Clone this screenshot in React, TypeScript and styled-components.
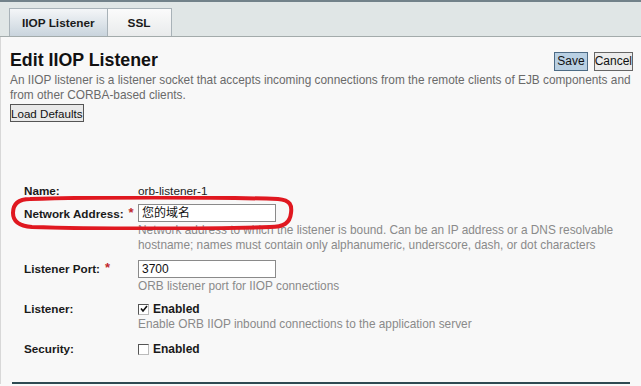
import React from 'react';
import styled, { createGlobalStyle } from 'styled-components';

const GlobalStyle = createGlobalStyle`
  html, body {
    margin: 0;
    padding: 0;
    background: #f8f8f8;
    font-family: 'Liberation Sans', Arial, sans-serif;
  }
`;

const TopLine = styled.div`
  height: 2px;
  background: #72828a;
`;

const TabBar = styled.div`
  display: flex;
  padding: 6px 0 0 9px;
  background: #e0e6e6;
  border-bottom: 1px solid #a3abab;
`;

const Tab = styled.div<{ $active?: boolean }>`
  height: 27px;
  padding: 0 ${(p) => (p.$active ? '12px' : '20px')};
  display: flex;
  align-items: center;
  font-size: 11.8px;
  font-weight: bold;
  color: #1a1a1a;
  border: 1px solid #a8b2b8;
  border-bottom: none;
  margin-right: -1px;
  background: ${(p) =>
    p.$active
      ? 'linear-gradient(#f4f6f8, #c9d4dd)'
      : 'linear-gradient(#fbfbfb, #e9ebec)'};
`;

const Content = styled.div`
  padding: 0 9px;
  border-left: 1px solid #d8d8d8;
`;

const HeaderRow = styled.div`
  display: flex;
  justify-content: space-between;
  align-items: flex-start;
  padding-top: 12px;
`;

const Title = styled.h1`
  margin: 0;
  font-size: 17.8px;
  font-weight: bold;
  color: #111;
  line-height: 22px;
`;

const Buttons = styled.div`
  display: flex;
  gap: 6px;
  margin-top: 3px;
  margin-right: -1px;
`;

const Btn = styled.button<{ $primary?: boolean; $pad?: number }>`
  font-family: 'Liberation Sans', Arial, sans-serif;
  font-size: 12px;
  height: 19px;
  padding: 0 ${(p) => p.$pad ?? 2}px;
  color: #111;
  border: 1px solid ${(p) => (p.$primary ? '#4d6b85' : '#666')};
  background: ${(p) => (p.$primary ? '#b9d0e3' : '#ececec')};
  border-radius: 0;
  line-height: 15px;
`;

const Description = styled.p`
  margin: 2px 0 0;
  font-size: 11.85px;
  line-height: 15px;
  color: #6a6a6a;
  white-space: nowrap;
`;

const LoadButton = styled(Btn)`
  margin-top: 1px;
  display: block;
  height: 18px;
  font-size: 11.6px;
  background: #e9e9e9;
  border-color: #555;
`;

const Form = styled.div`
  margin-top: 62px;
  padding-left: 14px;
  display: grid;
  grid-template-columns: 114px 1fr;
  position: relative;
`;

const Label = styled.div<{ $gap?: number }>`
  font-size: 11.7px;
  font-weight: bold;
  color: #1a1a1a;
  padding-top: ${(p) => p.$gap ?? 4}px;
  line-height: 14px;
  display: flex;
  gap: 5px;
`;

const Required = styled.span`
  color: #c0282d;
  font-size: 13px;
  line-height: 12px;
`;

const Field = styled.div<{ $gap?: number }>`
  padding-top: ${(p) => p.$gap ?? 4}px;
  font-size: 11.8px;
  color: #222;
  line-height: 14px;
`;

const TextBox = styled.div`
  width: 133px;
  height: 16px;
  border: 1px solid #8a8a8a;
  background: #fff;
  font-size: 12px;
  line-height: 16px;
  padding-left: 3px;
  box-sizing: content-box;
  color: #111;
  font-family: 'Liberation Sans', 'Noto Sans CJK SC', sans-serif;
`;

const Help = styled.div`
  color: #8a8a8a;
  font-size: 11.85px;
  line-height: 15px;
  margin-top: 1px;
`;

const CheckRow = styled.div`
  display: flex;
  align-items: center;
  gap: 4px;
  font-weight: bold;
  font-size: 12px;
  color: #1a1a1a;
`;

const Box = styled.span`
  width: 9px;
  height: 9px;
  border: 1px solid #555;
  border-right-color: #bbb;
  border-bottom-color: #bbb;
  background: #fff;
  display: inline-flex;
  align-items: center;
  justify-content: center;
`;

const Highlight = styled.svg`
  position: absolute;
  left: 0;
  top: 12px;
  width: 284px;
  height: 34px;
  pointer-events: none;
`;

const BottomLine = styled.div`
  margin: 26px 2px 0 2px;
  height: 2px;
  background: #2e4a52;
`;

function Check({ checked }: { checked?: boolean }) {
  return (
    <Box>
      {checked && (
        <svg width="8" height="8" viewBox="0 0 8 8">
          <path d="M1 3.5 L3 6 L7 1" stroke="#111" strokeWidth="1.6" fill="none" />
        </svg>
      )}
    </Box>
  );
}

export default function App() {
  return (
    <>
      <GlobalStyle />
      <TopLine />
      <TabBar>
        <Tab $active>IIOP Listener</Tab>
        <Tab>SSL</Tab>
      </TabBar>
      <Content>
        <HeaderRow>
          <Title>Edit IIOP Listener</Title>
          <Buttons>
            <Btn $primary $pad={2}>Save</Btn>
            <Btn $pad={0}>Cancel</Btn>
          </Buttons>
        </HeaderRow>
        <Description>
          An IIOP listener is a listener socket that accepts incoming connections from the remote clients of EJB components and
          <br />
          from other CORBA-based clients.
        </Description>
        <LoadButton $pad={0}>Load Defaults</LoadButton>
        <Form>
          <Label $gap={0}>Name:</Label>
          <Field $gap={0}>orb-listener-1</Field>

          <Label $gap={9}>
            Network Address: <Required>*</Required>
          </Label>
          <Field $gap={6}>
            <TextBox>您的域名</TextBox>
            <Help>
              Network address to which the listener is bound. Can be an IP address or a DNS resolvable
              <br />
              hostname; names must contain only alphanumeric, underscore, dash, or dot characters
            </Help>
          </Field>

          <Label $gap={9}>
            Listener Port: <Required>*</Required>
          </Label>
          <Field $gap={7}>
            <TextBox>3700</TextBox>
            <Help>ORB listener port for IIOP connections</Help>
          </Field>

          <Label $gap={8}>Listener:</Label>
          <Field $gap={8}>
            <CheckRow>
              <Check checked /> Enabled
            </CheckRow>
            <Help>Enable ORB IIOP inbound connections to the application server</Help>
          </Field>

          <Label $gap={10}>Security:</Label>
          <Field $gap={10}>
            <CheckRow>
              <Check /> Enabled
            </CheckRow>
          </Field>

          <Highlight viewBox="0 0 284 34">
            <path
              d="M20 3 C80 1 210 1 268 3 C281 4 282 10 281 17 C280 27 274 31 260 31 C200 33 80 33 22 31 C8 30 3 25 3 17 C3 8 8 3 20 3 Z"
              fill="none"
              stroke="#e01820"
              strokeWidth="4"
            />
          </Highlight>
        </Form>
        <BottomLine />
      </Content>
    </>
  );
}
